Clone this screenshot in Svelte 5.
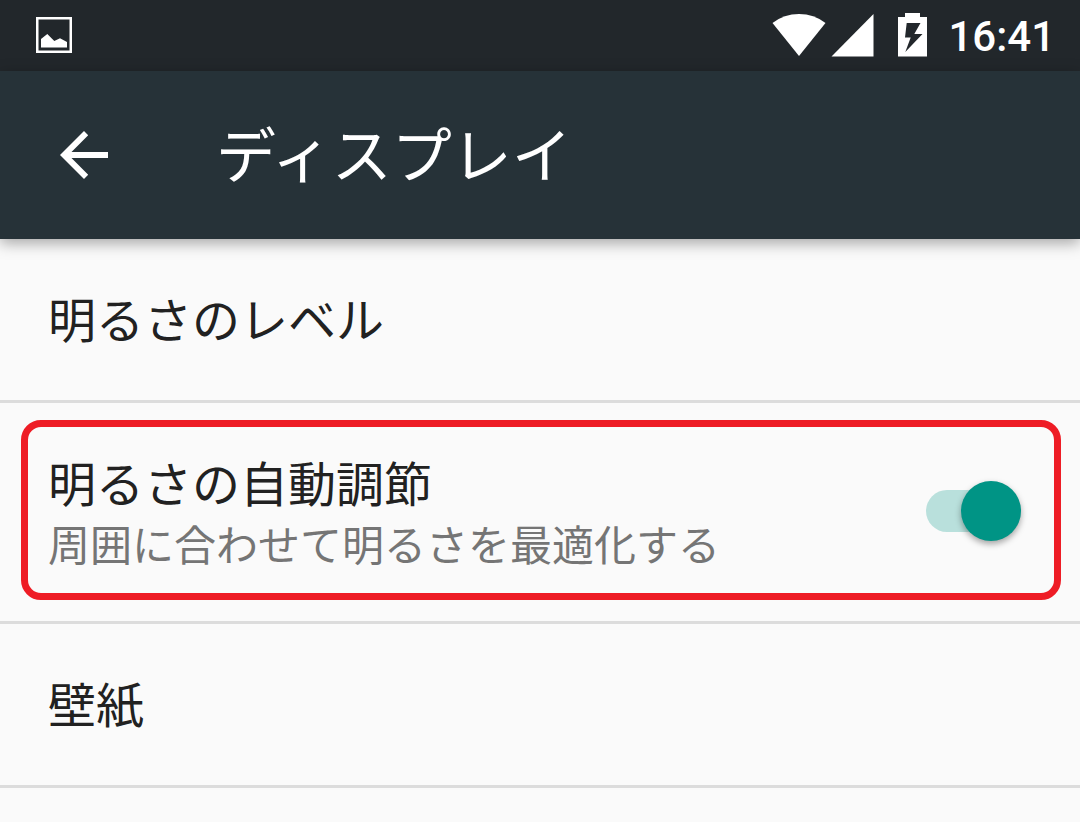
<script>
  let adaptive = $state(true);
</script>

<div class="screen">
  <div class="status">
    <svg class="picture" width="36" height="36" viewBox="0 0 36 36" role="img" aria-label="画像">
      <rect x="1.25" y="1.25" width="33.5" height="33.5" fill="none" stroke="#fff" stroke-width="2.5" />
      <path d="M5 30.500V22L11.300 17L18.300 24L24 21.300L31 25V30.500Z" fill="#fff" />
    </svg>
    <div class="indicators">
      <svg class="wifi" width="54" height="44" viewBox="0 0 54 44" role="img" aria-label="Wi-Fi">
        <path d="M0.500 10Q12 1 27 1T53.500 10L27 43Z" fill="#fff" />
      </svg>
      <svg class="signal" width="43" height="44" viewBox="0 0 43 44" role="img" aria-label="電波">
        <path d="M0.500 43.500L42.500 1V43.500Z" fill="#fff" />
      </svg>
      <svg class="battery" width="29" height="44" viewBox="0 0 29 44" role="img" aria-label="充電中">
        <path fill-rule="evenodd" d="M0 4H7V0H22V4H29V43.500H0ZM8.700 10L7 24.500H12.700L7.300 39L24.500 21H16.300L22.500 10Z" fill="#fff" />
      </svg>
      <time>16:41</time>
    </div>
  </div>

  <header>
    <button class="back" type="button" aria-label="戻る">
      <svg width="48" height="48" viewBox="0 0 48 48" aria-hidden="true">
        <path d="M48 21H11.500L28.200 4.200L24 0L0 24L24 48L28.200 43.800L11.500 27H48Z" fill="#fff" />
      </svg>
    </button>
    <h1>ディスプレイ</h1>
  </header>

  <main>
    <button class="row" type="button">明るさのレベル</button>
    <div class="row framed">
      <label class="option">
        <span class="text">
          <span class="name">明るさの自動調節</span>
          <span class="summary">周囲に合わせて明るさを最適化する</span>
        </span>
        <input type="checkbox" role="switch" bind:checked={adaptive} />
      </label>
    </div>
    <button class="row" type="button">壁紙</button>
  </main>
</div>

<style>
  :global(body) {
    margin: 0;
    background: #fafafa;
  }
  .screen {
    min-height: 100vh;
    background: #fafafa;
    color: #212121;
    font-family: "Noto Sans CJK JP", sans-serif;
  }
  .status {
    display: flex;
    align-items: center;
    justify-content: space-between;
    box-sizing: border-box;
    height: 71px;
    padding: 0 25px 2px 36px;
    background: #22272b;
    color: #fff;
  }
  .indicators {
    display: flex;
    align-items: center;
  }
  .signal {
    margin-left: 5px;
  }
  .battery {
    margin-left: 24px;
  }
  time {
    margin-left: 21px;
    padding-top: 4px;
    font: 500 42px/50px Roboto, sans-serif;
  }
  header {
    position: relative;
    display: flex;
    align-items: center;
    gap: 96px;
    height: 168px;
    padding: 0 48px;
    background: #263238;
    color: #fff;
    box-shadow: 0 4px 14px rgba(0, 0, 0, 0.35);
  }
  button {
    border: 0;
    background: none;
    color: inherit;
    font: inherit;
    text-align: left;
    cursor: pointer;
  }
  .back {
    display: flex;
    padding: 12px;
  }
  h1 {
    margin: 0;
    padding-bottom: 6px;
    font-size: 60px;
    font-weight: 400;
    line-height: 72px;
  }
  .row {
    display: block;
    box-sizing: border-box;
    width: 100%;
    padding: 43px 48px 48px;
    border-bottom: 3px solid #dcdcdc;
    font-size: 48px;
    line-height: 70px;
  }
  .framed {
    padding: 17px 19px 21px 21px;
  }
  .option {
    display: flex;
    align-items: center;
    justify-content: space-between;
    padding: 0 33px 0 20px;
    border: 7px solid #ee1c25;
    border-radius: 20px;
    cursor: pointer;
  }
  .text {
    display: flex;
    flex-direction: column;
    padding: 19px 0 23px;
  }
  .summary {
    color: #757575;
    font-size: 42px;
    line-height: 54px;
  }
  input {
    position: relative;
    flex: none;
    width: 96px;
    height: 60px;
    margin: 2px 0 0;
    appearance: none;
    cursor: pointer;
  }
  input::before {
    content: "";
    position: absolute;
    inset: 9px 0 9px 1px;
    border-radius: 21px;
    background: #bdbdbd;
  }
  input::after {
    content: "";
    position: absolute;
    top: 0;
    left: 0;
    width: 60px;
    height: 60px;
    border-radius: 50%;
    background: #f1f1f1;
    box-shadow: 0 3px 6px rgba(0, 0, 0, 0.35);
  }
  input:checked::before {
    background: #b9e0dc;
  }
  input:checked::after {
    left: 36px;
    background: #009485;
  }
</style>
